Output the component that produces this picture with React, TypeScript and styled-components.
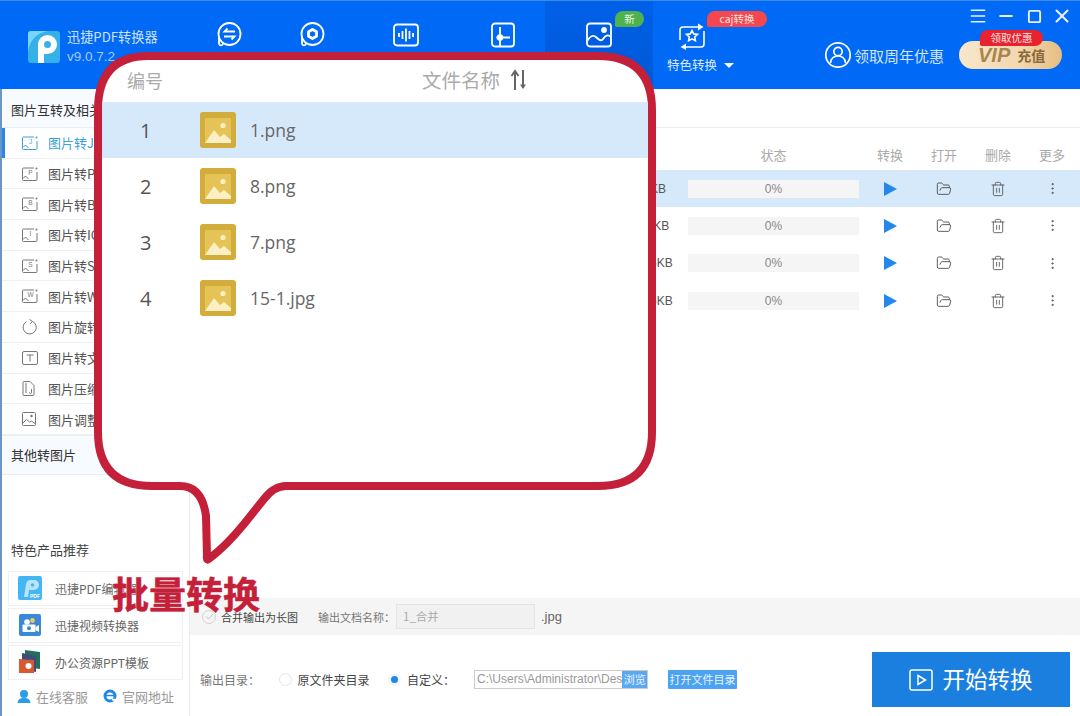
import React from 'react';
import styled, { createGlobalStyle } from 'styled-components';
import { FolderOpen, Trash2, MoreVertical, Menu, Minus, Square, X } from 'lucide-react';

const GlobalStyle = createGlobalStyle`
    html, body {
        margin: 0;
        padding: 0;
        background: #fff;
        font-family: "Noto Sans CJK SC", "Liberation Sans", sans-serif;
    }
    * { box-sizing: border-box; }
`;

const navIcons: { width: number; offset?: number; icon: React.ReactNode; active?: boolean }[] = [
    {
        width: 82,
        icon: (
            <>
                <circle cx="13.500" cy="12" r="11" />
                <path d="M3 15.500v5.500a2 2 0 1 0 3.800-.4" />
                <path d="M19 9.500H8.500l3-3M8 14.500h10.500l-3 3" />
            </>
        ),
    },
    {
        width: 84,
        icon: (
            <>
                <circle cx="13.500" cy="12" r="11" />
                <path d="M3 15.500v5.500a2 2 0 1 0 3.800-.4" />
                <path d="M13.500 7.500l4 2.250v4.500l-4 2.250-4-2.250v-4.500z" strokeWidth="2.800" strokeLinejoin="round" />
            </>
        ),
    },
    {
        width: 104,
        icon: (
            <>
                <rect x="1" y="2.500" width="24" height="21" rx="3" />
                <path d="M6 11v4M9.500 9v8M13 6.500v13M16.500 9v8M20 11v4" />
            </>
        ),
    },
    {
        width: 87,
        offset: 3,
        icon: (
            <>
                <rect x="2" y="1.500" width="22" height="23" rx="3" />
                <path d="M10 5v19M6.500 15.500H20" />
                <circle cx="10" cy="15.500" r="2.400" fill="#fff" />
            </>
        ),
    },
    {
        width: 108,
        active: true,
        icon: (
            <>
                <rect x="1" y="1.500" width="24" height="23" rx="3" />
                <path d="M1.500 18.500c3-5 6-6 9-3s5 4 7 1 4-4 7-2" />
                <circle cx="18" cy="8" r="2" fill="#fff" />
            </>
        ),
    },
];

const menuItems = [
    { label: '图片转JPG', mark: 'J' },
    { label: '图片转PNG', mark: 'P' },
    { label: '图片转BMP', mark: 'B' },
    { label: '图片转ICO', mark: 'I' },
    { label: '图片转SVG', mark: 'S' },
    { label: '图片转WORD', mark: 'W' },
    { label: '图片旋转', kind: 'rotate' },
    { label: '图片转文字', kind: 'text' },
    { label: '图片压缩', kind: 'zip' },
    { label: '图片调整', kind: 'image' },
];

const rows = [
    { name: '1.png', size: '123.4KB' },
    { name: '8.png', size: '12345KB' },
    { name: '7.png', size: '123.45KB' },
    { name: '15-1.jpg', size: '123.45KB' },
];

const MenuGlyph = ({ mark, kind, color }: { mark?: string; kind?: string; color: string }) => {
    if (kind === 'rotate') {
        return (
            <svg width="16" height="16" viewBox="0 0 16 16" fill="none" stroke={color} strokeWidth="1">
                <path d="M10.500 2.400A6.600 6.600 0 1 1 4.500 2.600" />
                <path d="M7.500 0.500l3 2-2.400 2.400" />
            </svg>
        );
    }
    if (kind === 'text') {
        return (
            <svg width="16" height="14" viewBox="0 0 16 14" fill="none" stroke={color} strokeWidth="1">
                <rect x="0.500" y="0.500" width="15" height="13" rx="1.500" />
                <path d="M4.500 4h7M8 4v6.500" />
            </svg>
        );
    }
    if (kind === 'zip') {
        return (
            <svg width="13" height="15" viewBox="0 0 13 15" fill="none" stroke={color} strokeWidth="1">
                <path d="M1 1.500a1 1 0 0 1 1-1h6l4 4v9a1 1 0 0 1-1 1H2a1 1 0 0 1-1-1z" />
                <path d="M3 3h2M3 5h2M3 7h2M3 9h2M3 11h2" />
                <path d="M9.500 8v3.500a1 1 0 0 1-2 0" />
            </svg>
        );
    }
    if (kind === 'image') {
        return (
            <svg width="14" height="14" viewBox="0 0 14 14" fill="none" stroke={color} strokeWidth="1">
                <rect x="0.500" y="0.500" width="13" height="13" rx="1" />
                <path d="M1 11l3.500-3.500 3 2.500 2-1 3.500 2.500" />
                <circle cx="9.500" cy="4" r="1.200" fill={color} stroke="none" />
            </svg>
        );
    }
    return (
        <svg width="16" height="14" viewBox="0 0 16 14" fill="none" stroke={color} strokeWidth="1">
            <path d="M12 1H1.500a1 1 0 0 0-1 1v10.500a1 1 0 0 0 1 1h12.500a1 1 0 0 0 1-1V5" />
            <path d="M1 11.500l2.500-2.500 3 3" />
            <circle cx="14.500" cy="1.500" r="1" fill={color} stroke="none" />
            <text x="8.500" y="8" fontSize="6.500" textAnchor="middle" fill={color} stroke="none" fontFamily="Liberation Sans">
                {mark}
            </text>
        </svg>
    );
};

const ImageFile = () => (
    <svg width="36" height="36" viewBox="0 0 36 36">
        <rect width="36" height="36" rx="3" fill="#d2ad3b" />
        <rect x="5" y="6" width="26" height="25" fill="#e5c357" />
        <circle cx="23" cy="13.500" r="2.600" fill="#fbf0c4" />
        <path d="M5 31l9-13 6 7 4-3 7 6v3z" fill="#fbf0c4" />
    </svg>
);

const PlayMark = () => (
    <svg width="13" height="14" viewBox="0 0 13 14">
        <path d="M0 0l13 7-13 7z" fill="#2388ea" />
    </svg>
);

const App = () => (
    <Page>
        <GlobalStyle />
        <Header>
            <Brand>
                <Logo width="32" height="32" viewBox="0 0 32 32">
                    <rect width="32" height="32" rx="3" fill="#36b0e8" />
                    <path d="M0 22C1 10 8 2 20 0H3a3 3 0 0 0-3 3z" fill="#7ad4f7" />
                    <path d="M10 32V13.500a9.500 9.500 0 1 1 9.500 9.500H16v9z" fill="#fff" />
                    <circle cx="19.500" cy="13.500" r="3.500" fill="#36b0e8" />
                </Logo>
                <BrandText>
                    <BrandName>迅捷PDF转换器</BrandName>
                    <BrandVersion>v9.0.7.2</BrandVersion>
                </BrandText>
            </Brand>
            <Nav>
                {navIcons.map((item, i) => (
                    <NavItem key={i} $width={item.width} $active={item.active} $offset={item.offset}>
                        <svg width="26" height="26" viewBox="0 0 26 26" fill="none" stroke="#fff" strokeWidth="1.800">
                            {item.icon}
                        </svg>
                        {item.active && <NewBadge>新</NewBadge>}
                    </NavItem>
                ))}
                <NavItem $width={78}>
                    <svg width="28" height="28" viewBox="0 0 28 28" fill="none" stroke="#fff" strokeWidth="1.600">
                        <path d="M2 18V8a3 3 0 0 1 3-3h17" />
                        <path d="M20 1.500L25.500 5 20 8.500z" fill="#fff" stroke="none" />
                        <path d="M26 9v13a3 3 0 0 1-3 3H6" />
                        <path d="M8 21.500L2.500 25 8 28z" fill="#fff" stroke="none" />
                        <path d="M14 8.500l1.700 3.400 3.800.5-2.800 2.600.7 3.700-3.400-1.800-3.400 1.800.7-3.700-2.800-2.600 3.800-.5z" />
                    </svg>
                    <NavLabel>
                        特色转换 <Caret />
                    </NavLabel>
                    <CajBadge>caj转换</CajBadge>
                </NavItem>
            </Nav>
            <HeaderRight>
                <WindowControls>
                    <Menu size={20} strokeWidth={1.800} />
                    <Minus size={20} strokeWidth={2.400} />
                    <Square size={15} strokeWidth={3} />
                    <X size={22} strokeWidth={2.200} />
                </WindowControls>
                <PromoRow>
                    <svg width="28" height="28" viewBox="0 0 28 28" fill="none" stroke="#fff" strokeWidth="1.700">
                        <circle cx="14" cy="14" r="12.200" />
                        <circle cx="14" cy="10.500" r="4.200" />
                        <path d="M6.500 22c.5-4.500 3.500-7 7.500-7s7 2.500 7.500 7" />
                    </svg>
                    <PromoText>领取周年优惠</PromoText>
                    <VipButton>
                        <VipMark>VIP</VipMark>
                        <VipText>充值</VipText>
                        <VipBadge>领取优惠</VipBadge>
                    </VipButton>
                </PromoRow>
            </HeaderRight>
        </Header>
        <Body>
            <Sidebar>
                <SectionTitle>图片互转及相关</SectionTitle>
                {menuItems.map((item, i) => (
                    <MenuRow key={item.label} $active={i === 0}>
                        <GlyphSlot>
                            <MenuGlyph mark={item.mark} kind={item.kind} color={i === 0 ? '#3f9fd8' : '#777'} />
                        </GlyphSlot>
                        {item.label}
                    </MenuRow>
                ))}
                <SectionTitleSecond>其他转图片</SectionTitleSecond>
                <Products>
                    <ProductsTitle>特色产品推荐</ProductsTitle>
                    <ProductCard>
                        <svg width="24" height="24" viewBox="0 0 24 24">
                            <rect width="24" height="24" rx="2" fill="#45b6f4" />
                            <path d="M6 21l2-13a5 5 0 0 1 5-4h3a5 5 0 0 1 0 10h-5l-1 7z" fill="#b9e5fc" />
                            <circle cx="14.500" cy="9" r="1.800" fill="#45b6f4" />
                            <text x="17" y="21.500" fontSize="5" fontWeight="700" textAnchor="middle" fill="#fff" fontFamily="Liberation Sans">
                                PDF
                            </text>
                        </svg>
                        迅捷PDF编辑器
                    </ProductCard>
                    <ProductCard>
                        <svg width="24" height="24" viewBox="0 0 24 24">
                            <rect width="22" height="22" x="1" y="1" rx="2" fill="#3a88d8" />
                            <circle cx="9" cy="9" r="2.800" fill="#fff" />
                            <circle cx="14.500" cy="7.500" r="2.400" fill="#f0c95a" />
                            <rect x="4.500" y="11.500" width="13" height="7.500" rx="1" fill="#fff" />
                            <circle cx="11" cy="15.200" r="2" fill="#3a88d8" />
                            <path d="M17.500 14l3.500-2v7l-3.500-2z" fill="#fff" />
                        </svg>
                        迅捷视频转换器
                    </ProductCard>
                    <ProductCard>
                        <svg width="24" height="24" viewBox="0 0 24 24">
                            <path d="M7 0l15 2v17l-15-2z" fill="#22705c" />
                            <path d="M4 3l14 3v16l-14-3z" fill="#3c4d7a" />
                            <path d="M1 9l15 1v13H1z" fill="#d9582f" />
                            <circle cx="10.500" cy="16" r="3" fill="#fff" />
                        </svg>
                        办公资源PPT模板
                    </ProductCard>
                    <SupportRow>
                        <SupportLink>
                            <svg width="14" height="14" viewBox="0 0 14 14">
                                <circle cx="7" cy="5" r="4" fill="#2a9be8" />
                                <path d="M0.500 14c.5-4 3-5 6.500-5s6 1 6.500 5z" fill="#2a9be8" />
                            </svg>
                            在线客服
                        </SupportLink>
                        <SupportLink>
                            <svg width="14" height="14" viewBox="0 0 14 14">
                                <circle cx="7" cy="7" r="5" fill="none" stroke="#1e88e5" strokeWidth="3" />
                                <path d="M3 6.500h9" stroke="#1e88e5" strokeWidth="1.500" />
                                <path d="M9 10.500l4 .5" stroke="#fff" strokeWidth="2" />
                            </svg>
                            官网地址
                        </SupportLink>
                    </SupportRow>
                </Products>
            </Sidebar>
            <Main>
                <TabBar />
                <TableHead>
                    <span>文件名称</span>
                    <span>大小</span>
                    <HeadCell>状态</HeadCell>
                    <HeadCell>转换</HeadCell>
                    <HeadCell>打开</HeadCell>
                    <HeadCell>删除</HeadCell>
                    <HeadCell>更多</HeadCell>
                </TableHead>
                {rows.map((row, i) => (
                    <TableRow key={row.name} $selected={i === 0}>
                        <span>{row.name}</span>
                        <span>{row.size}</span>
                        <Progress>0%</Progress>
                        <ActionCell>
                            <PlayMark />
                        </ActionCell>
                        <ActionCell>
                            <FolderOpen size={16} color="#444" strokeWidth={1.300} />
                        </ActionCell>
                        <ActionCell>
                            <Trash2 size={16} color="#555" strokeWidth={1.300} />
                        </ActionCell>
                        <ActionCell>
                            <MoreVertical size={15} color="#555" strokeWidth={1.500} />
                        </ActionCell>
                    </TableRow>
                ))}
                <MergeBar>
                    <CheckMark>
                        <svg width="9" height="9" viewBox="0 0 9 9" fill="none" stroke="#c4c4c4" strokeWidth="1">
                            <path d="M1 4.500l2.500 2.500L8 2" />
                        </svg>
                    </CheckMark>
                    <MergeLabel>合并输出为长图</MergeLabel>
                    <MergeName>输出文档名称：</MergeName>
                    <NameInput>1_合并</NameInput>
                    <Extension>.jpg</Extension>
                </MergeBar>
                <OutputBar>
                    <OutputLabel>输出目录：</OutputLabel>
                    <Radio />
                    <RadioText $width={96.500}>原文件夹目录</RadioText>
                    <Radio $checked />
                    <RadioText $width={73}>自定义：</RadioText>
                    <PathBox>
                        <PathText>C:\Users\Administrator\Des</PathText>
                        <BrowseButton>浏览</BrowseButton>
                    </PathBox>
                    <OpenButton>打开文件目录</OpenButton>
                    <StartButton>
                        <svg width="24" height="24" viewBox="0 0 24 24" fill="none" stroke="#fff" strokeWidth="1.500">
                            <rect x="1" y="2" width="22" height="20" rx="2" />
                            <path d="M9 7.500l7.500 4.500L9 16.500z" />
                        </svg>
                        <StartLabel>开始转换</StartLabel>
                    </StartButton>
                </OutputBar>
            </Main>
        </Body>
        <Callout>
            <CalloutShape width="562" height="512" viewBox="0 0 562 512">
                <path
                    d="M54 4H504Q558 4 558 58V380Q558 434 504 434H192Q180 434 170 447L150 472Q132 494 116 506Q112 510 113 504L112 464Q108 434 86 434H58Q4 434 4 380V58Q4 4 54 4Z"
                    fill="#fff"
                    stroke="#c4203a"
                    strokeWidth="8"
                    strokeLinejoin="round"
                />
            </CalloutShape>
            <CalloutHead>
                <CalloutNumberHead>编号</CalloutNumberHead>
                <CalloutNameHead>文件名称</CalloutNameHead>
                <svg width="18" height="22" viewBox="0 0 18 22" fill="none" stroke="#666" strokeWidth="2">
                    <path d="M5 21V3M1.500 7L5 2l3.500 5" />
                    <path d="M13 1v18" />
                    <path d="M10 15.500h6L13 20z" fill="#666" stroke="none" />
                </svg>
            </CalloutHead>
            {rows.map((row, i) => (
                <CalloutRow key={row.name} $selected={i === 0}>
                    <CalloutNumber>{i + 1}</CalloutNumber>
                    <ImageFile />
                    <CalloutFile>{row.name}</CalloutFile>
                </CalloutRow>
            ))}
        </Callout>
        <CalloutCaption>批量转换</CalloutCaption>
    </Page>
);

const Page = styled.div`
    position: relative;
    width: 1080px;
    height: 716px;
    overflow: hidden;
    background: #fff;
    display: flex;
    flex-direction: column;
`;
const Header = styled.header`
    height: 89px;
    flex: none;
    display: flex;
    background: #0069f5;
    border-top: 1px solid #3d8ae8;
    color: #fff;
`;
const Brand = styled.div`
    width: 188px;
    padding: 27px 0 0 28px;
    display: flex;
    gap: 7px;
`;
const Logo = styled.svg`
    margin-top: 3px;
`;
const BrandText = styled.div`
    display: flex;
    flex-direction: column;
    margin-top: -1px;
    font-size: 13.200px;
    line-height: 20px;
    color: #cfe2fb;
`;
const BrandName = styled.div``;
const BrandVersion = styled.div`
    font-family: "Liberation Sans", sans-serif;
    font-size: 13.500px;
    color: #a8c9f5;
`;
const Nav = styled.nav`
    display: flex;
    height: 88px;
`;
const NavItem = styled.div<{ $width: number; $active?: boolean; $offset?: number }>`
    position: relative;
    width: ${(p) => p.$width}px;
    display: flex;
    flex-direction: column;
    align-items: center;
    padding: 21px 0 0 ${(p) => p.$offset ?? 0}px;
    background: ${(p) => (p.$active ? 'linear-gradient(180deg, #0060e8, #0059d6)' : 'none')};
`;
const NavLabel = styled.div`
    position: absolute;
    top: 54px;
    left: 14px;
    width: 90px;
    font-size: 12.500px;
    line-height: 20px;
    color: #dbe9fc;
    white-space: nowrap;
`;
const Caret = styled.span`
    display: inline-block;
    margin-left: 4px;
    border-left: 5px solid transparent;
    border-right: 5px solid transparent;
    border-top: 5px solid #fff;
    vertical-align: 2px;
`;
const NewBadge = styled.span`
    position: absolute;
    left: 70px;
    top: 10px;
    width: 29px;
    height: 16px;
    border-radius: 9px 9px 9px 2px;
    background: #4fb24f;
    font-size: 10.500px;
    line-height: 16px;
    text-align: center;
    color: #e8f5e4;
`;
const CajBadge = styled.span`
    position: absolute;
    left: 54px;
    top: 10px;
    width: 60px;
    height: 16px;
    border-radius: 9px 9px 9px 2px;
    background: #f4474f;
    font-size: 10.500px;
    line-height: 16px;
    text-align: center;
    color: #fde3e3;
    white-space: nowrap;
`;
const HeaderRight = styled.div`
    flex: 1;
    display: flex;
    flex-direction: column;
    align-items: flex-end;
`;
const WindowControls = styled.div`
    height: 30px;
    display: grid;
    grid-template-columns: repeat(4, 28px);
    place-items: center;
    padding-right: 4px;
    color: #eaf2fe;
`;
const PromoRow = styled.div`
    display: flex;
    align-items: center;
    padding: 10px 18px 0 0;
`;
const PromoText = styled.span`
    font-size: 15px;
    color: #d3e4fb;
    margin: 0 15px 0 2px;
`;
const VipButton = styled.div`
    position: relative;
    width: 103px;
    height: 28px;
    border-radius: 14px;
    background: linear-gradient(90deg, #f8e7cd, #f3d7ae 60%, #e6bd83);
    display: flex;
    align-items: center;
    padding-left: 19px;
    gap: 7px;
`;
const VipMark = styled.span`
    font-family: "Liberation Sans", sans-serif;
    font-size: 20px;
    font-weight: 700;
    font-style: italic;
    color: #a8874f;
`;
const VipText = styled.span`
    font-size: 14px;
    font-weight: 700;
    color: #8b6a3a;
`;
const VipBadge = styled.span`
    position: absolute;
    left: 21px;
    top: -11px;
    width: 63px;
    height: 16px;
    border-radius: 9px 9px 9px 2px;
    background: #e8222e;
    font-size: 10.500px;
    line-height: 16px;
    text-align: center;
    color: #fde0e0;
`;
const Body = styled.div`
    flex: 1;
    display: flex;
    min-height: 0;
`;
const Sidebar = styled.aside`
    width: 190px;
    flex: none;
    display: flex;
    flex-direction: column;
    border-left: 2px solid #6b96c4;
    border-right: 1px solid #ececec;
`;
const SectionTitle = styled.div`
    height: 39px;
    flex: none;
    padding: 3px 0 0 9px;
    display: flex;
    align-items: center;
    background: #f7faff;
    border-bottom: 1px solid #e8eef5;
    font-size: 13px;
    color: #333;
`;
const SectionTitleSecond = styled(SectionTitle)`
    height: 40px;
    padding-top: 0;
    border-top: 1px solid #e8eef5;
`;
const MenuRow = styled.div<{ $active?: boolean }>`
    height: 30.700px;
    flex: none;
    display: flex;
    align-items: center;
    border-bottom: 1px solid #f0f0f0;
    font-size: 13px;
    color: ${(p) => (p.$active ? '#3f9fd8' : '#555')};
    box-shadow: ${(p) => (p.$active ? 'inset 3px 0 0 #2388ea' : 'none')};
    white-space: nowrap;
`;
const GlyphSlot = styled.span`
    width: 46px;
    padding-left: 20px;
    display: flex;
`;
const Products = styled.div`
    flex: 1;
    display: flex;
    flex-direction: column;
    padding: 65px 6px 0 6px;
`;
const ProductsTitle = styled.div`
    height: 22px;
    padding-left: 3px;
    margin-bottom: 9px;
    font-size: 13px;
    line-height: 20px;
    color: #444;
`;
const ProductCard = styled.div`
    height: 35px;
    flex: none;
    margin-bottom: 2px;
    padding-left: 9px;
    display: flex;
    align-items: center;
    gap: 13px;
    border: 1px solid #f0f0f0;
    font-size: 12px;
    color: #666;
    white-space: nowrap;
`;
const SupportRow = styled.div`
    display: flex;
    gap: 15px;
    padding: 5px 0 0 9px;
`;
const SupportLink = styled.span`
    display: flex;
    align-items: center;
    gap: 5px;
    font-size: 13px;
    color: #999;
`;
const Main = styled.main`
    flex: 1;
    display: flex;
    flex-direction: column;
    min-width: 0;
`;
const TabBar = styled.div`
    height: 39px;
    flex: none;
    border-bottom: 1px solid #ececec;
`;
const columns = `
    display: grid;
    grid-template-columns: 430px 68px 171px 4px repeat(4, 54px);
    align-items: center;
`;
const TableHead = styled.div`
    ${columns}
    height: 42px;
    flex: none;
    padding-top: 10px;
    font-size: 13px;
    color: #aaa;
    & > :nth-child(4) {
        grid-column: 5;
    }
`;
const HeadCell = styled.span`
    text-align: center;
`;
const TableRow = styled.div<{ $selected?: boolean }>`
    ${columns}
    height: 37.300px;
    flex: none;
    background: ${(p) => (p.$selected ? '#d6e9fb' : 'transparent')};
    font-family: "Liberation Sans", sans-serif;
    font-size: 12px;
    color: #555;
    & > :nth-child(4) {
        grid-column: 5;
    }
`;
const Progress = styled.div`
    height: 18px;
    background: #f5f5f5;
    font-size: 12px;
    line-height: 18px;
    text-align: center;
    color: #888;
`;
const ActionCell = styled.span`
    display: flex;
    justify-content: center;
`;
const MergeBar = styled.div`
    margin-top: auto;
    height: 37px;
    flex: none;
    display: flex;
    align-items: center;
    padding-left: 12px;
    background: #f5f5f5;
    font-size: 11px;
`;
const CheckMark = styled.span`
    width: 14px;
    height: 14px;
    border: 1px solid #d4d4d4;
    border-radius: 50%;
    display: flex;
    align-items: center;
    justify-content: center;
`;
const MergeLabel = styled.span`
    width: 97px;
    margin-left: 5px;
    color: #444;
    white-space: nowrap;
`;
const MergeName = styled.span`
    width: 78px;
    color: #777;
    white-space: nowrap;
`;
const NameInput = styled.div`
    width: 139px;
    height: 25px;
    padding-left: 6px;
    border: 1px solid #e4e4e4;
    background: #f1f1f1;
    font-size: 11.500px;
    line-height: 23px;
    color: #aaa;
`;
const Extension = styled.span`
    margin-left: 6px;
    font-family: "Liberation Sans", sans-serif;
    font-size: 13px;
    color: #666;
`;
const OutputBar = styled.div`
    height: 81px;
    flex: none;
    display: flex;
    align-items: center;
    padding: 8px 0 0 10px;
    font-size: 12px;
`;
const OutputLabel = styled.span`
    width: 78.500px;
    color: #777;
    white-space: nowrap;
`;
const Radio = styled.span<{ $checked?: boolean }>`
    width: 13px;
    height: 13px;
    flex: none;
    border-radius: 50%;
    border: ${(p) => (p.$checked ? '3px solid #f2f6fb' : '1px solid #e6e6e6')};
    background: ${(p) => (p.$checked ? '#1e88e5' : '#fff')};
`;
const RadioText = styled.span<{ $width: number }>`
    width: ${(p) => p.$width}px;
    padding-left: 6px;
    color: #444;
    white-space: nowrap;
`;
const PathBox = styled.div`
    width: 174px;
    height: 19px;
    border: 1px solid #ccc;
    display: flex;
`;
const PathText = styled.span`
    width: 148px;
    padding-left: 2px;
    font-family: "Liberation Sans", sans-serif;
    font-size: 12px;
    line-height: 17px;
    color: #999;
    white-space: nowrap;
`;
const BrowseButton = styled.span`
    width: 26px;
    background: #5aa9f0;
    font-size: 11px;
    line-height: 17px;
    text-align: center;
    color: #eaf4fe;
`;
const OpenButton = styled.span`
    width: 69px;
    height: 19px;
    margin-left: 20px;
    border-radius: 1px;
    background: #4ba3f2;
    font-size: 11px;
    line-height: 19px;
    text-align: center;
    color: #eaf4fe;
    white-space: nowrap;
`;
const StartButton = styled.div`
    width: 198px;
    height: 55px;
    margin-left: 135px;
    display: flex;
    align-items: center;
    justify-content: center;
    gap: 9px;
    background: #1a7fde;
    font-size: 22.500px;
    color: #fff;
`;
const StartLabel = styled.span`
    line-height: 28px;
    margin-bottom: 4px;
`;
const Callout = styled.div`
    position: absolute;
    left: 94px;
    top: 52px;
    width: 562px;
    height: 512px;
    padding: 8px 8px 0;
`;
const CalloutShape = styled.svg`
    position: absolute;
    left: 0;
    top: 0;
`;
const CalloutHead = styled.div`
    position: relative;
    height: 42px;
    padding-bottom: 3px;
    display: flex;
    align-items: center;
    color: #aaa;
    font-size: 18px;
`;
const CalloutNumberHead = styled.span`
    width: 320px;
    padding-left: 25px;
`;
const CalloutNameHead = styled.span`
    width: 88px;
    font-size: 19.500px;
    white-space: nowrap;
`;
const CalloutRow = styled.div<{ $selected?: boolean }>`
    position: relative;
    height: 56px;
    display: flex;
    align-items: center;
    background: ${(p) => (p.$selected ? '#d6e9fb' : 'transparent')};
`;
const CalloutNumber = styled.span`
    width: 98px;
    padding-left: 38px;
    font-family: "Open Sans", sans-serif;
    font-size: 20px;
    color: #555;
`;
const CalloutFile = styled.span`
    margin-left: 14px;
    font-family: "Open Sans", sans-serif;
    font-size: 17.500px;
    color: #666;
`;
const CalloutCaption = styled.div`
    position: absolute;
    left: 112px;
    top: 566px;
    font-size: 37px;
    line-height: 54px;
    font-weight: 700;
    color: #c4203a;
    white-space: nowrap;
    -webkit-text-stroke: 0.5px #c4203a;
    text-shadow: 0 0 2px #fff;
`;

export default App;
